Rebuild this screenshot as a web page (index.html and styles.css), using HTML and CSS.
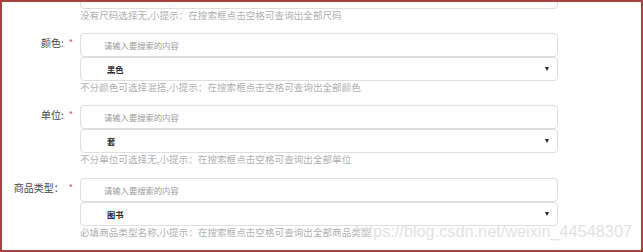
FILE: index.html
```html
<!DOCTYPE html>
<html lang="zh-CN">
<head>
    <meta charset="UTF-8">
    <meta name="viewport" content="width=device-width, initial-scale=1.0">
    <title>商品属性</title>
    <link rel="stylesheet" href="styles.css">
</head>
<body>
    <div class="frame">
        <form class="form">
            <!-- size group, scrolled mostly out of view -->
            <div class="field">
                <div class="label"></div>
                <div class="controls">
                    <input type="text" class="search" placeholder="请输入要搜索的内容">
                    <p class="help">没有尺码选择无,小提示：在搜索框点击空格可查询出全部尺码</p>
                </div>
            </div>

            <div class="field">
                <label class="label" for="color">颜色:<span class="req">*</span></label>
                <div class="controls">
                    <input type="text" class="search" placeholder="请输入要搜索的内容">
                    <div class="select-wrap">
                        <select id="color">
                            <option>黑色</option>
                        </select>
                    </div>
                    <p class="help">不分颜色可选择混搭,小提示：在搜索框点击空格可查询出全部颜色</p>
                </div>
            </div>

            <div class="field">
                <label class="label" for="unit">单位:<span class="req">*</span></label>
                <div class="controls">
                    <input type="text" class="search" placeholder="请输入要搜索的内容">
                    <div class="select-wrap">
                        <select id="unit">
                            <option>套</option>
                        </select>
                    </div>
                    <p class="help">不分单位可选择无,小提示：在搜索框点击空格可查询出全部单位</p>
                </div>
            </div>

            <div class="field">
                <label class="label" for="type">商品类型：<span class="req">*</span></label>
                <div class="controls">
                    <input type="text" class="search" placeholder="请输入要搜索的内容">
                    <div class="select-wrap">
                        <select id="type">
                            <option>图书</option>
                        </select>
                    </div>
                    <p class="help">必填商品类型名称,小提示：在搜索框点击空格可查询出全部商品类型</p>
                </div>
            </div>

            <div class="field">
                <div class="label"></div>
                <div class="controls">
                    <input type="text" class="search" placeholder="请输入要搜索的内容">
                </div>
            </div>
        </form>
        <div class="watermark">https://blog.csdn.net/weixin_44548307</div>
    </div>
</body>
</html>
```

FILE: styles.css
```css
body {
    margin: 0;
    background-color: #fff;
    font-family: "Noto Sans CJK SC", "Noto Sans", sans-serif;
    color: #444;
}
.frame {
    position: relative;
    width: 643px;
    height: 252px;
    box-sizing: border-box;
    border: 2px solid #a8423f;
    overflow: hidden;
}
.form {
    margin: -17px 0 0;
}
.field {
    display: grid;
    grid-template-columns: 78px 478px;
    margin-bottom: 12.2px;
}
.label {
    display: flex;
    justify-content: flex-end;
    padding: 3px 7px 0 0;
    font-size: 10px;
    line-height: 14px;
    color: #444;
}
.req {
    color: #e0484d;
    margin-left: 5px;
    font-size: 9px;
}
.controls {
    display: flex;
    flex-direction: column;
}
.search, select {
    display: block;
    width: 100%;
    height: 24px;
    box-sizing: border-box;
    margin: 0;
    border: 1px solid #dedede;
    border-radius: 4px;
    background: #fff;
    font-family: inherit;
    outline: none;
}
.search {
    padding: 0 0 0 23px;
    font-size: 8.3px;
}
.search::placeholder {
    color: #999;
}
.select-wrap {
    position: relative;
}
select {
    appearance: none;
    -webkit-appearance: none;
    padding: 0 0 0 26px;
    font-size: 8.3px;
    font-weight: bold;
    color: #2a2a2a;
}
.select-wrap::after {
    content: "";
    position: absolute;
    right: 9px;
    top: 10px;
    border-left: 2.5px solid transparent;
    border-right: 2.5px solid transparent;
    border-top: 4px solid #222;
}
.help {
    margin: 0;
    height: 12px;
    font-size: 9.6px;
    line-height: 12px;
    color: #b0b0b0;
    white-space: nowrap;
}
.watermark {
    position: absolute;
    right: 9px;
    top: 220px;
    font-family: "Liberation Sans", Arial, sans-serif;
    font-size: 16.3px;
    color: rgba(222, 222, 222, 0.9);
}
```
